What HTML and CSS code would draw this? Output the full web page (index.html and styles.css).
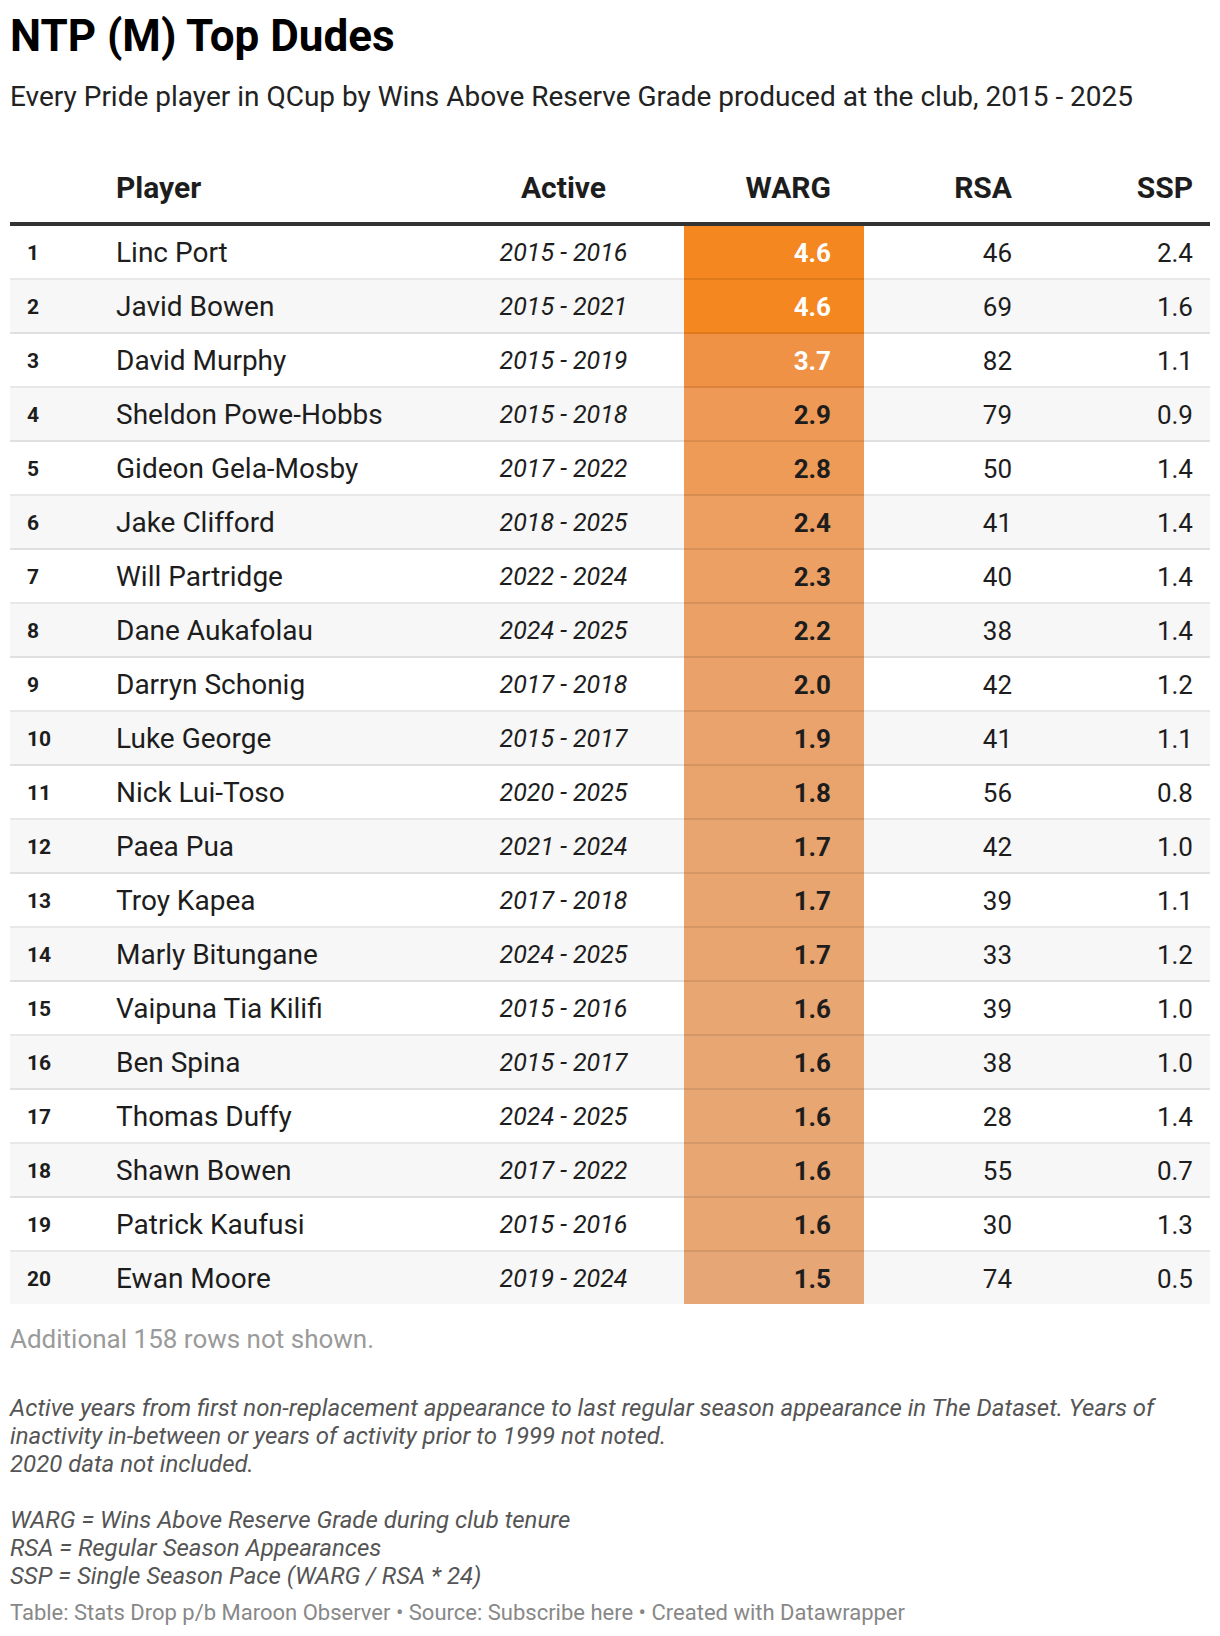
FILE: index.html
```html
<!DOCTYPE html>
<html lang="en">
<head>
<meta charset="utf-8">
<title>NTP (M) Top Dudes</title>
<link rel="stylesheet" href="styles.css">
</head>
<body>
<div class="chart">
  <h1 class="title">NTP (M) Top Dudes</h1>
  <p class="subtitle">Every Pride player in QCup by Wins Above Reserve Grade produced at the club, 2015 - 2025</p>

  <table class="tbl">
    <colgroup>
      <col class="c-rank"><col class="c-player"><col class="c-active"><col class="c-warg"><col class="c-rsa"><col class="c-ssp">
    </colgroup>
    <thead>
      <tr>
        <th class="rank"></th>
        <th class="player">Player</th>
        <th class="active">Active</th>
        <th class="warg">WARG</th>
        <th class="num">RSA</th>
        <th class="num last">SSP</th>
      </tr>
    </thead>
    <tbody>
      <tr><td class="rank">1</td><td class="player">Linc Port</td><td class="active">2015 - 2016</td><td class="warg light" style="background:#f4871f">4.6</td><td class="num">46</td><td class="num last">2.4</td></tr>
      <tr><td class="rank">2</td><td class="player">Javid Bowen</td><td class="active">2015 - 2021</td><td class="warg light" style="background:#f4871f">4.6</td><td class="num">69</td><td class="num last">1.6</td></tr>
      <tr><td class="rank">3</td><td class="player">David Murphy</td><td class="active">2015 - 2019</td><td class="warg light" style="background:#f09245">3.7</td><td class="num">82</td><td class="num last">1.1</td></tr>
      <tr><td class="rank">4</td><td class="player">Sheldon Powe-Hobbs</td><td class="active">2015 - 2018</td><td class="warg" style="background:#ee9a56">2.9</td><td class="num">79</td><td class="num last">0.9</td></tr>
      <tr><td class="rank">5</td><td class="player">Gideon Gela-Mosby</td><td class="active">2017 - 2022</td><td class="warg" style="background:#ee9b58">2.8</td><td class="num">50</td><td class="num last">1.4</td></tr>
      <tr><td class="rank">6</td><td class="player">Jake Clifford</td><td class="active">2018 - 2025</td><td class="warg" style="background:#ec9f61">2.4</td><td class="num">41</td><td class="num last">1.4</td></tr>
      <tr><td class="rank">7</td><td class="player">Will Partridge</td><td class="active">2022 - 2024</td><td class="warg" style="background:#eca063">2.3</td><td class="num">40</td><td class="num last">1.4</td></tr>
      <tr><td class="rank">8</td><td class="player">Dane Aukafolau</td><td class="active">2024 - 2025</td><td class="warg" style="background:#eba065">2.2</td><td class="num">38</td><td class="num last">1.4</td></tr>
      <tr><td class="rank">9</td><td class="player">Darryn Schonig</td><td class="active">2017 - 2018</td><td class="warg" style="background:#eaa26a">2.0</td><td class="num">42</td><td class="num last">1.2</td></tr>
      <tr><td class="rank">10</td><td class="player">Luke George</td><td class="active">2015 - 2017</td><td class="warg" style="background:#eaa36c">1.9</td><td class="num">41</td><td class="num last">1.1</td></tr>
      <tr><td class="rank">11</td><td class="player">Nick Lui-Toso</td><td class="active">2020 - 2025</td><td class="warg" style="background:#e9a46e">1.8</td><td class="num">56</td><td class="num last">0.8</td></tr>
      <tr><td class="rank">12</td><td class="player">Paea Pua</td><td class="active">2021 - 2024</td><td class="warg" style="background:#e9a570">1.7</td><td class="num">42</td><td class="num last">1.0</td></tr>
      <tr><td class="rank">13</td><td class="player">Troy Kapea</td><td class="active">2017 - 2018</td><td class="warg" style="background:#e9a570">1.7</td><td class="num">39</td><td class="num last">1.1</td></tr>
      <tr><td class="rank">14</td><td class="player">Marly Bitungane</td><td class="active">2024 - 2025</td><td class="warg" style="background:#e9a570">1.7</td><td class="num">33</td><td class="num last">1.2</td></tr>
      <tr><td class="rank">15</td><td class="player">Vaipuna Tia Kilifi</td><td class="active">2015 - 2016</td><td class="warg" style="background:#e8a673">1.6</td><td class="num">39</td><td class="num last">1.0</td></tr>
      <tr><td class="rank">16</td><td class="player">Ben Spina</td><td class="active">2015 - 2017</td><td class="warg" style="background:#e8a673">1.6</td><td class="num">38</td><td class="num last">1.0</td></tr>
      <tr><td class="rank">17</td><td class="player">Thomas Duffy</td><td class="active">2024 - 2025</td><td class="warg" style="background:#e8a673">1.6</td><td class="num">28</td><td class="num last">1.4</td></tr>
      <tr><td class="rank">18</td><td class="player">Shawn Bowen</td><td class="active">2017 - 2022</td><td class="warg" style="background:#e8a673">1.6</td><td class="num">55</td><td class="num last">0.7</td></tr>
      <tr><td class="rank">19</td><td class="player">Patrick Kaufusi</td><td class="active">2015 - 2016</td><td class="warg" style="background:#e8a673">1.6</td><td class="num">30</td><td class="num last">1.3</td></tr>
      <tr><td class="rank">20</td><td class="player">Ewan Moore</td><td class="active">2019 - 2024</td><td class="warg" style="background:#e7a676">1.5</td><td class="num">74</td><td class="num last">0.5</td></tr>
    </tbody>
  </table>

  <p class="more">Additional 158 rows not shown.</p>

  <div class="notes">
    <p>Active years from first non-replacement appearance to last regular season appearance in The Dataset. Years of inactivity in-between or years of activity prior to 1999 not noted.<br>2020 data not included.</p>
    <p>WARG = Wins Above Reserve Grade during club tenure<br>RSA = Regular Season Appearances<br>SSP = Single Season Pace (WARG / RSA * 24)</p>
  </div>

  <p class="footer">Table: Stats Drop p/b Maroon Observer • Source: Subscribe here • Created with Datawrapper</p>
</div>
</body>
</html>
```

FILE: styles.css
```css
* { box-sizing: border-box; }

html, body {
  margin: 0;
  padding: 0;
  background: #ffffff;
}

body {
  font-family: Roboto, "Noto Sans", "Liberation Sans", sans-serif;
  color: #1d1d1d;
}

.chart {
  width: 1220px;
  padding: 11px 10px 0 10px;
}

.title {
  margin: 0;
  font-size: 44px;
  line-height: 50px;
  font-weight: 700;
  color: #000;
}

.subtitle {
  margin: 18px 0 0 0;
  font-size: 28px;
  line-height: 36px;
  color: #222;
}

.tbl {
  margin-top: 35px;
  width: 1200px;
  table-layout: fixed;
  border-collapse: separate;
  border-spacing: 0;
}

.c-rank { width: 90px; }
.c-player { width: 343px; }
.c-active { width: 241px; }
.c-warg { width: 180px; }
.c-rsa { width: 165px; }
.c-ssp { width: 181px; }

.tbl th {
  padding: 20px 0 16px 0;
  line-height: 36px;
  font-size: 30px;
  font-weight: 700;
  color: #1d1d1d;
  border-bottom: 4px solid #333;
  white-space: nowrap;
}

.tbl td {
  height: 54px;
  padding: 2px 0 0 0;
  font-size: 26px;
  line-height: 34px;
  vertical-align: middle;
  border-bottom: 2px solid rgba(0, 0, 0, 0.09);
  white-space: nowrap;
}

.tbl tbody tr:nth-child(even) td { background-color: #f7f7f7; }
.tbl tbody tr:last-child td { border-bottom: none; height: 52px; }

.rank { padding-left: 17px !important; text-align: left; }
.tbl td.rank { font-size: 21px; font-weight: 700; }
.player { padding-left: 16px !important; text-align: left; }
.tbl td.player { font-size: 28px; }
.active { text-align: center; }
.tbl td.active { font-style: italic; font-size: 25px; }
.warg { text-align: right; padding-right: 33px !important; }
.tbl td.warg { font-weight: 700; }
.tbl td.warg.light { color: #fff; }
.num { text-align: right; padding-right: 17px !important; }

.more {
  margin: 19px 0 0 0;
  font-size: 26px;
  line-height: 32px;
  color: #9a9a9a;
}

.notes {
  margin-top: 39px;
  font-size: 24px;
  line-height: 28px;
  font-style: italic;
  color: #555;
}

.notes p { margin: 0 0 28px 0; }
.notes p:last-child { margin-bottom: 0; }

.footer {
  margin: 10px 0 0 0;
  font-size: 22px;
  line-height: 26px;
  color: #888;
}
```
